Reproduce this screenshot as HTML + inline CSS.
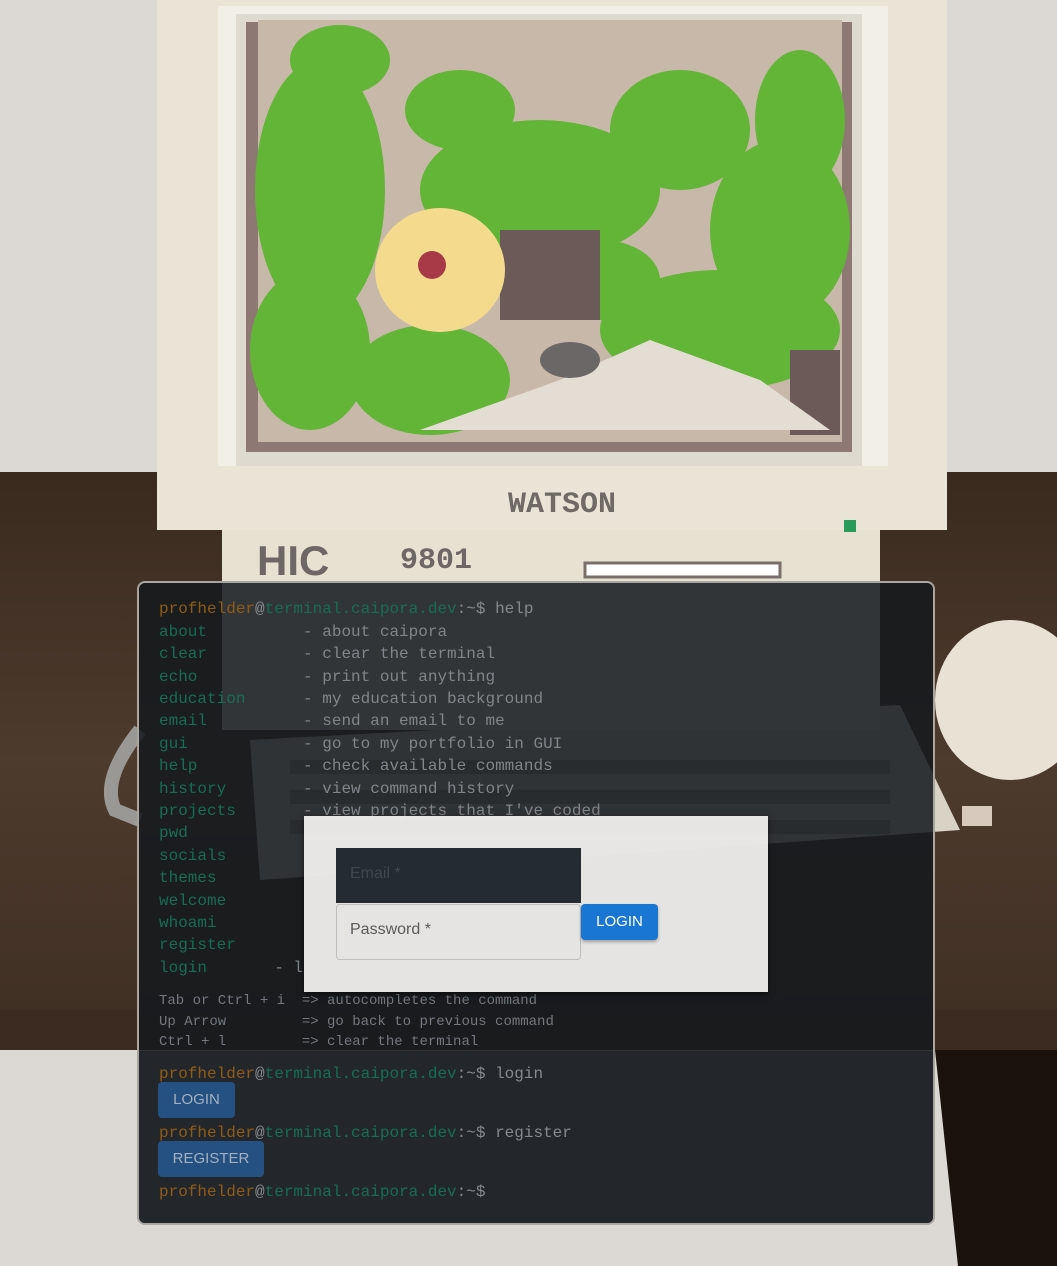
<!DOCTYPE html>
<html><head><meta charset="utf-8"><style>
*{margin:0;padding:0;box-sizing:border-box}
body{width:1057px;height:1266px;overflow:hidden;position:relative;background:#dcd9d4;font-family:"Liberation Mono",monospace}
.abs{position:absolute}
.term{left:137px;top:581px;width:798px;height:644px;border-radius:8px;background:rgba(20,25,29,0.86);border:2px solid #a9a6a2;overflow:hidden}
.ln{position:absolute;left:20px;font-size:16px;line-height:20px;white-space:pre;color:#80858a}
.o{color:#8f5c17}.g{color:#176d53}.w{color:#868a8f}
.sm{font-size:14px;color:#74797e}
.btn{position:absolute;background:#245181;color:#a2b0c0;font-family:"Liberation Sans",sans-serif;font-size:15px;border-radius:4px;text-align:center;line-height:36px}
</style></head><body>
<svg class="abs" style="left:0;top:0" width="1057" height="1266">
<defs><linearGradient id="wd" x1="0" y1="0" x2="0" y2="1"><stop offset="0" stop-color="#3a2a1e"/><stop offset="0.5" stop-color="#4d3b2d"/><stop offset="1" stop-color="#3e2e22"/></linearGradient></defs>
<rect x="0" y="472" width="1057" height="578" fill="url(#wd)"/>
<rect x="0" y="1010" width="1057" height="40" fill="#3b2b20"/>
<polygon points="935,1050 1057,1050 1057,1266 958,1266" fill="#1b120d"/>
<path d="M140,730 Q100,780 115,810 L140,820" stroke="#9a9894" stroke-width="14" fill="none"/>
<ellipse cx="1010" cy="700" rx="75" ry="80" fill="#e8e1d4"/>
<rect x="962" y="806" width="30" height="20" fill="#d8c9bd"/>
<!-- keyboard under terminal -->
<polygon points="250,740 900,705 960,830 260,880" fill="#d9d3c6"/>
<g fill="#a9a196"><rect x="290" y="760" width="600" height="14"/><rect x="290" y="790" width="600" height="14"/><rect x="290" y="820" width="600" height="14"/></g>
<rect x="157" y="0" width="790" height="530" fill="#e9e4d6"/>
<rect x="222" y="530" width="658" height="200" fill="#e7e1d1"/>
<rect x="218" y="6" width="670" height="460" fill="#f2efe6"/>
<rect x="236" y="14" width="626" height="452" fill="#dedad0"/>
<rect x="246" y="22" width="606" height="430" fill="#8e7874"/>
<rect x="258" y="20" width="584" height="422" fill="#c8b8aa"/>
<g fill="#62b536">
<ellipse cx="320" cy="190" rx="65" ry="130"/><ellipse cx="540" cy="190" rx="120" ry="70"/>
<ellipse cx="680" cy="130" rx="70" ry="60"/><ellipse cx="780" cy="230" rx="70" ry="90"/>
<ellipse cx="310" cy="350" rx="60" ry="80"/><ellipse cx="430" cy="380" rx="80" ry="55"/>
<ellipse cx="720" cy="330" rx="120" ry="60"/><ellipse cx="460" cy="110" rx="55" ry="40"/>
<ellipse cx="800" cy="120" rx="45" ry="70"/><ellipse cx="600" cy="280" rx="60" ry="40"/>
<ellipse cx="340" cy="60" rx="50" ry="35"/>
</g>
<g fill="#6b5a58"><rect x="500" y="230" width="100" height="90"/><rect x="790" y="350" width="50" height="85"/></g>
<polygon points="420,430 560,380 650,340 760,380 830,430" fill="#e4ddd4"/>
<ellipse cx="440" cy="270" rx="65" ry="62" fill="#f3da8c"/>
<circle cx="432" cy="265" r="14" fill="#a83a48"/>
<ellipse cx="570" cy="360" rx="30" ry="18" fill="#6b6766"/>
<text x="562" y="512" font-family="Liberation Mono,monospace" font-weight="bold" font-size="30" fill="#6f6a66" text-anchor="middle">WATSON</text>
<rect x="844" y="520" width="12" height="12" fill="#2a9a5a"/>
<text x="257" y="575" font-family="Liberation Sans,sans-serif" font-weight="bold" font-size="42" fill="#6d6866">HIC</text>
<text x="400" y="568" font-family="Liberation Mono,monospace" font-weight="bold" font-size="30" fill="#6d6866">9801</text>
<rect x="585" y="563" width="195" height="14" fill="#fff" stroke="#7a6e6a" stroke-width="3"/>
</svg>
<div class="abs term">
<div class="ln" style="top:16px"><span class="o">profhelder</span><span class="w">@</span><span class="g">terminal.caipora.dev</span><span class="w">:~$ help</span></div>
<div class="ln" style="top:39px"><span class="g">about          </span>- about caipora</div>
<div class="ln" style="top:61px"><span class="g">clear          </span>- clear the terminal</div>
<div class="ln" style="top:84px"><span class="g">echo           </span>- print out anything</div>
<div class="ln" style="top:106px"><span class="g">education      </span>- my education background</div>
<div class="ln" style="top:128px"><span class="g">email          </span>- send an email to me</div>
<div class="ln" style="top:151px"><span class="g">gui            </span>- go to my portfolio in GUI</div>
<div class="ln" style="top:173px"><span class="g">help           </span>- check available commands</div>
<div class="ln" style="top:196px"><span class="g">history        </span>- view command history</div>
<div class="ln" style="top:218px"><span class="g">projects       </span>- view projects that I've coded</div>
<div class="ln" style="top:240px"><span class="g">pwd</span></div>
<div class="ln" style="top:263px"><span class="g">socials</span></div>
<div class="ln" style="top:285px"><span class="g">themes</span></div>
<div class="ln" style="top:308px"><span class="g">welcome</span></div>
<div class="ln" style="top:330px"><span class="g">whoami</span></div>
<div class="ln" style="top:352px"><span class="g">register</span></div>
<div class="ln" style="top:375px"><span class="g">login       </span>- l</div>
<div class="ln sm" style="top:408px">Tab or Ctrl + i  => autocompletes the command</div>
<div class="ln sm" style="top:429px">Up Arrow         => go back to previous command</div>
<div class="ln sm" style="top:449px">Ctrl + l         => clear the terminal</div>
<div class="abs" style="left:0;top:468px;width:798px;height:180px;background:#23272b"></div>
<div class="ln" style="top:481px"><span class="o">profhelder</span><span class="w">@</span><span class="g">terminal.caipora.dev</span><span class="w">:~$ login</span></div>
<div class="btn" style="left:19px;top:499px;width:77px">LOGIN</div>
<div class="ln" style="top:540px"><span class="o">profhelder</span><span class="w">@</span><span class="g">terminal.caipora.dev</span><span class="w">:~$ register</span></div>
<div class="btn" style="left:19px;top:558px;width:106px">REGISTER</div>
<div class="ln" style="top:599px"><span class="o">profhelder</span><span class="w">@</span><span class="g">terminal.caipora.dev</span><span class="w">:~$</span></div>
</div>
<div class="abs" style="left:304px;top:816px;width:464px;height:176px;background:rgba(242,241,239,0.94);box-shadow:0 2px 6px rgba(0,0,0,.6);font-family:'Liberation Sans',sans-serif">
<div class="abs" style="left:32px;top:32px;width:245px;height:55px;background:#242b32;color:#3e464e;font-size:16px;padding:17px 14px">Email *</div>
<div class="abs" style="left:32px;top:88px;width:245px;height:56px;border:1px solid #bdbdbd;border-radius:4px;color:#5a5a5a;font-size:16px;padding:16px 13px">Password *</div>
<div class="abs" style="left:277px;top:88px;width:77px;height:36px;background:#1976d2;color:#fff;border-radius:4px;font-size:15px;text-align:center;line-height:35px;box-shadow:0 2px 3px rgba(0,0,0,.3)">LOGIN</div>
</div>
</body></html>
